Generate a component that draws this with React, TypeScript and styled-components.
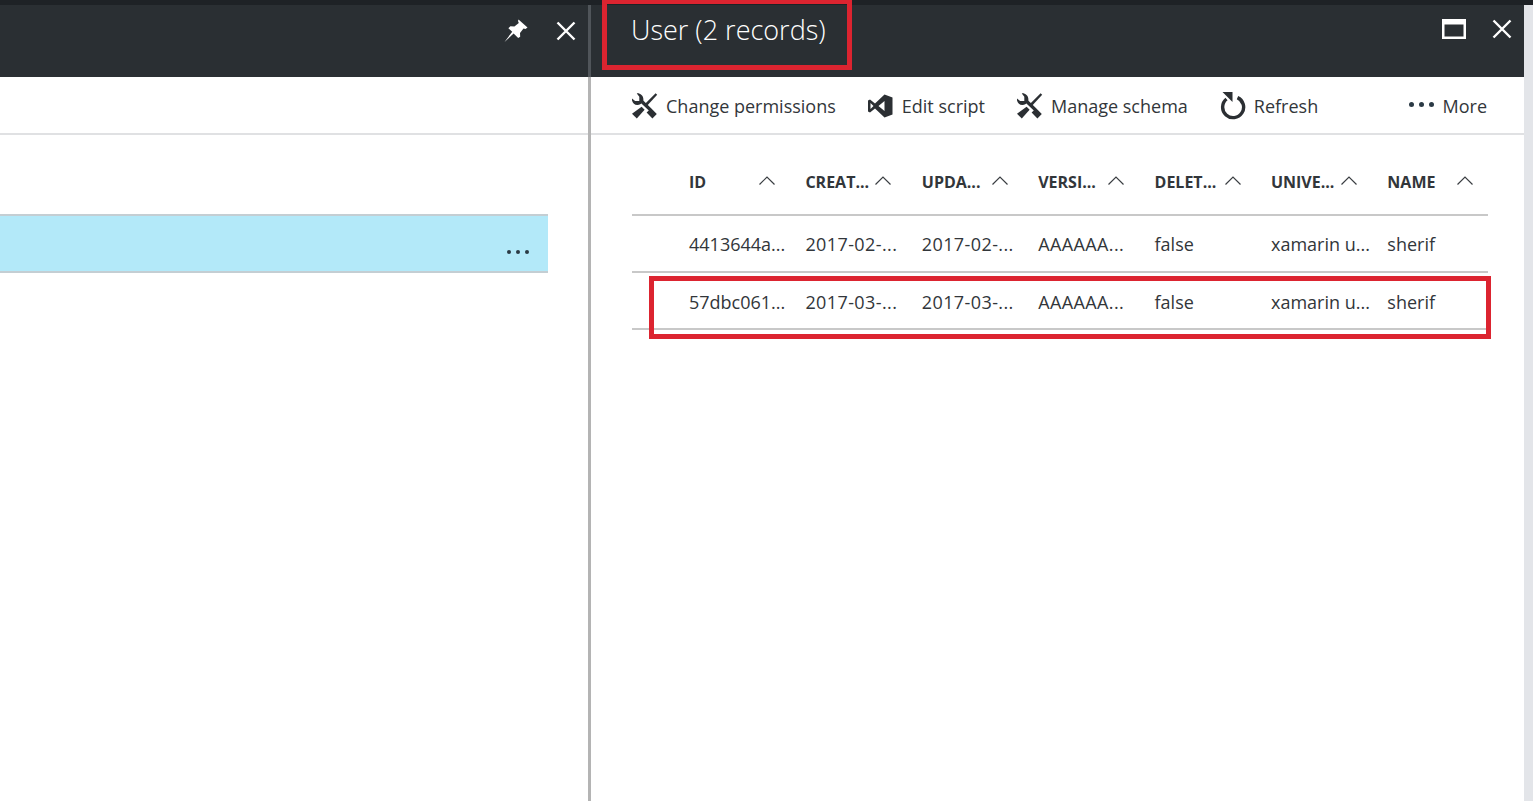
import React from "react";
import styled, { createGlobalStyle } from "styled-components";

const GlobalStyle = createGlobalStyle`
  html, body {
    margin: 0;
    padding: 0;
    height: 100%;
    overflow: hidden;
    background: #fff;
  }
  #root {
    height: 100%;
  }
`;

const columns = ["ID", "CREAT...", "UPDA...", "VERSI...", "DELET...", "UNIVE...", "NAME"];

const records = [
  ["4413644a...", "2017-02-...", "2017-02-...", "AAAAAA...", "false", "xamarin u...", "sherif"],
  ["57dbc061...", "2017-03-...", "2017-03-...", "AAAAAA...", "false", "xamarin u...", "sherif"],
];

const WrenchIcon = () => (
  <svg width="26" height="28" viewBox="1 0 26 28" fill="#2b2f33">
    <path d="M5.8 1.4C9 1 12.4 3.8 12.4 7.2 12.4 8 12.2 8.8 11.9 9.5L9.7 11.9C8.6 12.7 7.4 13 6.3 13 3 13 0.6 9.8 0.8 6.3L4.1 9H8.3V4.8Z" />
    <path d="M9.6 10.8 12 8.2 20.4 16.4 25.8 22 21.4 26.4 15.6 20.6 17.8 18.6Z" />
    <path d="M24.6 1.2 26.2 2.8 15.6 14.2 13.6 12.2Z" />
    <path d="M10.6 14.8 13.6 17.8 5.8 26.4 1 21.8Z" />
  </svg>
);

const VsIcon = () => (
  <svg width="26" height="26" viewBox="1 0 26 26" fill="#2b2f33">
    <path fillRule="evenodd" d="M17.5 1.5 25.5 4.5V21.5L17.5 24.5 8 15.5 3 19.5 0.8 18.5V7.5L3 6.5 8 10.5ZM17.5 8 11.5 13 17.5 18ZM3.5 10V16L6.5 13Z" />
  </svg>
);

const RefreshIcon = () => (
  <svg width="26" height="28" viewBox="-1 0 26 28" fill="none">
    <path d="M16.5 5.6A10.5 10.5 0 1 1 5.5 7" stroke="#2b2f33" strokeWidth="3.4" />
    <path d="M1.5 0H11.5V10Z" fill="#2b2f33" />
  </svg>
);

const PinIcon = () => (
  <svg width="24" height="24" viewBox="0 0 24 24" fill="#fff">
    <path d="M14.5 0.5 23.5 8.5 21.5 10 19.5 9.5 16 14 16.2 17.8 14.2 19 9.6 14.6 0.5 23 8.2 12.8 4.4 9.2 6.4 7.2 10.4 7.4 14.8 4 14 2Z" />
  </svg>
);

const CloseIcon = () => (
  <svg width="20" height="20" viewBox="0 0 20 20" stroke="#fff" strokeWidth="2.4">
    <path d="M1.5 1.5 18.5 18.5M18.5 1.5 1.5 18.5" />
  </svg>
);

const MaximizeIcon = () => (
  <svg width="24" height="20" viewBox="0 0 24 20" fill="none" stroke="#fff">
    <rect x="1.25" y="1.25" width="21.5" height="17.5" strokeWidth="2.5" />
    <path d="M1 3.5H23" strokeWidth="4" />
  </svg>
);

const SortIcon = () => (
  <svg width="16" height="9" viewBox="0 0 16 9" fill="none" stroke="#3a3e42" strokeWidth="1.2">
    <path d="M0.5 8.5 8 1 15.5 8.5" />
  </svg>
);

function App() {
  return (
    <>
      <GlobalStyle />
      <Page>
        <TopStrip />
        <Blades>
          <LeftBlade>
            <BladeHeader>
              <HeaderIcons $gap={28}>
                <PinIcon />
                <CloseIcon />
              </HeaderIcons>
            </BladeHeader>
            <EmptyToolbar />
            <SelectedRow>
              <RowDots>
                <Dot $size={4} />
                <Dot $size={4} />
                <Dot $size={4} />
              </RowDots>
            </SelectedRow>
          </LeftBlade>

          <RightBlade>
            <RightHeader>
              <Title>User (2 records)</Title>
              <HeaderIcons $gap={26}>
                <MaximizeIcon />
                <CloseIcon />
              </HeaderIcons>
              <TitleHighlight />
            </RightHeader>

            <Toolbar>
              <ToolButton>
                <WrenchIcon />
                Change permissions
              </ToolButton>
              <ToolButton>
                <VsIcon />
                Edit script
              </ToolButton>
              <ToolButton>
                <WrenchIcon />
                Manage schema
              </ToolButton>
              <ToolButton>
                <RefreshIcon />
                Refresh
              </ToolButton>
              <MoreButton>
                <MoreDots>
                  <Dot $size={5} />
                  <Dot $size={5} />
                  <Dot $size={5} />
                </MoreDots>
                More
              </MoreButton>
            </Toolbar>

            <TableArea>
              <HeaderRow>
                {columns.map((name) => (
                  <HeaderCell key={name}>
                    <HeaderName>{name}</HeaderName>
                    <SortIcon />
                  </HeaderCell>
                ))}
              </HeaderRow>
              {records.map((record) => (
                <DataRow key={record[0]}>
                  {record.map((value, i) => (
                    <DataCell key={i} $wide={i >= 1 && i <= 3}>
                      {value}
                    </DataCell>
                  ))}
                </DataRow>
              ))}
              <RowHighlight />
            </TableArea>
          </RightBlade>

          <ScrollEdge />
        </Blades>
      </Page>
    </>
  );
}

const Page = styled.div`
  height: 801px;
  display: flex;
  flex-direction: column;
  font-family: "Open Sans", "Noto Sans", sans-serif;
  color: #32363a;
`;

const TopStrip = styled.div`
  height: 5px;
  flex: none;
  background: #1e2226;
`;

const Blades = styled.div`
  flex: 1;
  display: flex;
  min-height: 0;
`;

const LeftBlade = styled.section`
  width: 588px;
  flex: none;
  display: flex;
  flex-direction: column;
`;

const RightBlade = styled.section`
  width: 933px;
  flex: none;
  display: flex;
  flex-direction: column;
  border-left: 3px solid #b4b4b4;
`;

const ScrollEdge = styled.div`
  flex: 1;
  background: #e3e5e9;
`;

const BladeHeader = styled.header`
  position: relative;
  height: 72px;
  flex: none;
  display: flex;
  align-items: flex-start;
  background: #2a2f33;
`;

const RightHeader = styled(BladeHeader)`
  &::before {
    content: "";
    position: absolute;
    left: -3px;
    top: 0;
    bottom: 0;
    width: 3px;
    background: #50555a;
  }
`;

const Title = styled.h1`
  margin: 5px 0 0 40px;
  font-size: 27px;
  line-height: 40px;
  font-weight: 300;
  color: #fff;
`;

const HeaderIcons = styled.div<{ $gap: number }>`
  margin: 14px 12px 0 auto;
  display: flex;
  align-items: center;
  gap: ${(p) => p.$gap}px;
`;

const TitleHighlight = styled.div`
  position: absolute;
  left: 11px;
  top: -6px;
  width: 250px;
  height: 71px;
  box-sizing: border-box;
  border: 5px solid #dc2430;
`;

const EmptyToolbar = styled.div`
  height: 56px;
  flex: none;
  border-bottom: 2px solid #e0e1e3;
`;

const SelectedRow = styled.div`
  margin-top: 79px;
  width: 548px;
  height: 59px;
  display: flex;
  align-items: center;
  justify-content: flex-end;
  padding-right: 19px;
  box-sizing: border-box;
  background: #b3e9f9;
  border-top: 2px solid #c4ced3;
  border-bottom: 2px solid #c4ced3;
`;

const RowDots = styled.div`
  display: flex;
  gap: 5px;
  margin-top: 17px;
`;

const Dot = styled.span<{ $size: number }>`
  width: ${(p) => p.$size}px;
  height: ${(p) => p.$size}px;
  border-radius: 50%;
  background: #2b3a45;
`;

const Toolbar = styled.div`
  height: 58px;
  flex: none;
  box-sizing: border-box;
  display: flex;
  align-items: center;
  padding: 2px 37px 0 41px;
  gap: 32px;
  border-bottom: 2px solid #e0e1e3;
`;

const ToolButton = styled.div`
  display: flex;
  align-items: center;
  gap: 8px;
  font-size: 18px;
  white-space: nowrap;
`;

const MoreButton = styled(ToolButton)`
  margin-left: auto;
  gap: 9px;
`;

const MoreDots = styled.div`
  display: flex;
  gap: 5px;
  margin-top: -3px;
`;

const TableArea = styled.div`
  position: relative;
  margin: 0 36px 0 41px;
  padding-top: 23px;
`;

const gridTemplate = "57px repeat(7, 116.4px)";

const HeaderRow = styled.div`
  display: grid;
  grid-template-columns: ${gridTemplate};
  height: 58px;
  border-bottom: 2px solid #c8c8c8;
  box-sizing: border-box;
`;

const HeaderCell = styled.div`
  display: flex;
  align-items: flex-start;
  padding-top: 14px;

  &:first-child {
    grid-column: 2;
  }

  svg {
    margin-top: 4px;
  }
`;

const HeaderName = styled.span`
  width: 70px;
  flex: none;
  font-size: 16px;
  line-height: 20px;
  font-weight: 700;
  white-space: nowrap;
`;

const DataRow = styled.div`
  display: grid;
  grid-template-columns: ${gridTemplate};
  align-items: center;
  height: 57px;
  box-sizing: border-box;
  border-bottom: 2px solid #c8c8c8;

  & + & {
    padding-top: 2px;
  }
`;

const DataCell = styled.span<{ $wide: boolean }>`
  font-size: 18px;
  white-space: nowrap;
  letter-spacing: ${(p) => (p.$wide ? "0.4px" : "0")};

  &:first-child {
    grid-column: 2;
  }
`;

const RowHighlight = styled.div`
  position: absolute;
  left: 17px;
  right: -3px;
  top: 141px;
  height: 63px;
  box-sizing: border-box;
  border: 5px solid #dc2430;
`;

export default App;
